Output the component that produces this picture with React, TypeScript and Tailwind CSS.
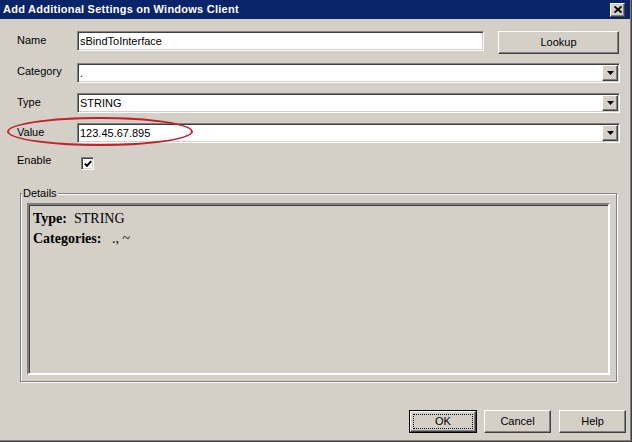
import React from "react";

const sunken =
  "border border-t-[#808080] border-l-[#808080] border-b-white border-r-white shadow-[inset_1px_1px_0_#404040,inset_-1px_-1px_0_#d4d0c8]";
const raised =
  "border border-t-white border-l-white border-b-[#404040] border-r-[#404040] shadow-[inset_-1px_-1px_0_#808080]";

function ComboBox({ value }: { value: string }) {
  return (
    <div className={`w-[543px] h-[20px] bg-white flex items-center ${sunken}`}>
      <span className="flex-1 pl-[2px] leading-[16px] truncate">{value}</span>
      <div className={`w-[16px] h-[16px] mr-[1px] bg-[#d4d0c8] flex items-center justify-center ${raised}`}>
        <svg width="7" height="4" viewBox="0 0 7 4">
          <path d="M0 0h7L3.5 4z" fill="#000" />
        </svg>
      </div>
    </div>
  );
}

function Button({ label, isDefault, className }: { label: string; isDefault?: boolean; className?: string }) {
  if (isDefault) {
    return (
      <div className={`h-[23px] border border-black ${className ?? ""}`}>
        <div className={`h-full bg-[#d4d0c8] flex items-center justify-center p-[2px] ${raised}`}>
          <div className="w-full h-full border border-dotted border-black flex items-center justify-center">
            {label}
          </div>
        </div>
      </div>
    );
  }
  return (
    <div className={`h-[23px] bg-[#d4d0c8] flex items-center justify-center ${raised} ${className ?? ""}`}>
      {label}
    </div>
  );
}

export default function App() {
  return (
    <div
      className="w-[632px] h-[442px] bg-[#d4d0c8] text-[11px] text-black border-r border-b border-[#404040]"
      style={{ fontFamily: '"Liberation Sans", Arial, sans-serif' }}
    >
      <div className="w-full h-full border-r border-b border-[#808080] flex flex-col">
        {/* Title bar */}
        <div className="h-[19px] bg-[#0a246a] flex items-center pl-[3px] pr-[5px] shrink-0">
          <span className="flex-1 text-white font-bold tracking-[0.25px] leading-[19px]">
            Add Additional Settings on Windows Client
          </span>
          <div className={`w-[15px] h-[14px] bg-[#d4d0c8] flex items-center justify-center ${raised}`}>
            <svg width="8" height="7" viewBox="0 0 8 7">
              <path d="M0.5 0.5L7.5 6.5M7.5 0.5L0.5 6.5" stroke="#000" strokeWidth="1.9" />
            </svg>
          </div>
        </div>

        {/* Body */}
        <div className="relative flex-1 pl-[17px] flex flex-col">
          {/* Name */}
          <div className="flex items-start mt-[12px] h-[21px]">
            <span className="w-[60px] leading-[18px]">Name</span>
            <div className={`w-[407px] h-[20px] bg-white flex items-center ${sunken}`}>
              <span className="pl-[2px] leading-[16px]">sBindToInterface</span>
            </div>
            <Button label="Lookup" className="ml-[14px] w-[121px] h-[22px]" />
          </div>

          {/* Category */}
          <div className="flex items-center mt-[11px] h-[20px]">
            <span className="w-[60px] pb-[4px]">Category</span>
            <ComboBox value="." />
          </div>

          {/* Type */}
          <div className="flex items-center mt-[10px] h-[20px]">
            <span className="w-[60px] pb-[2px]">Type</span>
            <ComboBox value="STRING" />
          </div>

          {/* Value */}
          <div className="flex items-center mt-[10px] h-[20px]">
            <span className="w-[60px] pb-[2px]">Value</span>
            <ComboBox value="123.45.67.895" />
          </div>

          {/* Enable */}
          <div className="flex items-start mt-[14px] h-[13px]">
            <span className="w-[64px] leading-[7px]">Enable</span>
            <div className={`w-[13px] h-[13px] bg-white flex items-center justify-center ${sunken}`}>
              <svg width="8" height="8" viewBox="0 0 8 8">
                <path d="M0.8 3.6L3 5.8L7.2 1.2" stroke="#000" strokeWidth="2" fill="none" />
              </svg>
            </div>
          </div>

          {/* Details group */}
          <div className="relative ml-[3px] mt-[23px] w-[597px] h-[189px] border border-[#808080] shadow-[inset_1px_1px_0_#fff,1px_1px_0_#fff] pt-[9px] pl-[6px]">
            <span className="absolute -top-[7px] left-[1px] bg-[#d4d0c8] pl-[1px] pr-[1px] leading-[12px]">Details</span>
            <div className="w-[583px] h-[172px] border-2 border-t-[#808080] border-l-[#808080] border-b-white border-r-white shadow-[inset_1px_1px_0_#404040] pt-[4px] pl-[4px]"
              style={{ fontFamily: '"Liberation Serif", "Times New Roman", serif' }}>
              <div className="text-[14px] leading-[20px]">
                <span className="font-bold">Type:</span>&nbsp; STRING
              </div>
              <div className="text-[14px] leading-[20px]">
                <span className="font-bold">Categories:</span>&nbsp;&nbsp; ., ~
              </div>
            </div>
          </div>

          {/* Buttons */}
          <div className="flex justify-end mt-[28px] pr-[4px]">
            <Button label="OK" isDefault className="w-[68px]" />
            <Button label="Cancel" className="ml-[7px] w-[67px]" />
            <Button label="Help" className="ml-[8px] w-[67px]" />
          </div>

          {/* Red highlight ellipse */}
          <div className="absolute left-[7px] top-[98px] w-[186px] h-[29px] rounded-[50%] border-2 border-[#c0232b]" />
        </div>
      </div>
    </div>
  );
}
